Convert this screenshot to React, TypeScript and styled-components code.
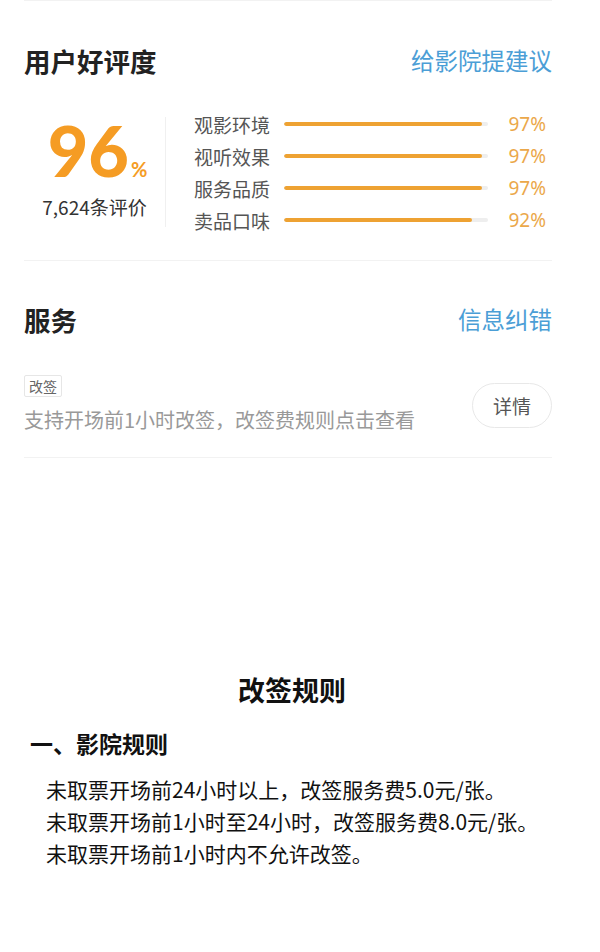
import React from "react";
import styled, { createGlobalStyle } from "styled-components";

const Global = createGlobalStyle`
  html, body { margin: 0; padding: 0; background: #fff; }
  body { font-family: "Noto Sans CJK SC", "Noto Sans", sans-serif; color: #222; }
`;

const Page = styled.div`
  width: 600px;
  height: 952px;
  background: #fff;
  overflow: hidden;
`;

const Content = styled.div`
  padding: 0 48px 0 24px;
`;

const Rule = styled.div`
  height: 1px;
  background: #f2f2f2;
`;

const Spacer = styled.div<{ $h: number }>`
  height: ${(p) => p.$h}px;
`;

const SectionHead = styled.div`
  display: flex;
  justify-content: space-between;
  align-items: center;
  height: 38px;
`;

const SectionTitle = styled.h2`
  margin: 0;
  font-size: 26.5px;
  font-weight: 700;
  color: #222;
`;

const SectionLink = styled.span`
  font-size: 23.5px;
  color: #4b9ed6;
`;

const Rating = styled.div`
  display: flex;
  align-items: center;
  margin-top: 29px;
  margin-bottom: 24px;
`;

const ScoreCol = styled.div`
  width: 142px;
  height: 110px;
  box-sizing: border-box;
  padding-top: 5px;
  display: flex;
  flex-direction: column;
  align-items: center;
  justify-content: flex-start;
  border-right: 1px solid #f0f0f0;
`;

const Score = styled.div`
  display: flex;
  align-items: baseline;
  color: #f59c24;
  height: 56px;
  margin-left: 6px;
`;

const ScoreNum = styled.div`
  font-family: Lato, "Noto Sans", sans-serif;
  font-size: 70px;
  font-weight: 900;
  letter-spacing: 0px;
  line-height: 56px;
  height: 56px;
`;

const ScorePct = styled.div`
  font-family: Lato, "Noto Sans", sans-serif;
  font-size: 20px;
  font-weight: 700;
  margin-left: 2px;
  line-height: 20px;
`;

const Count = styled.div`
  font-size: 19px;
  color: #333;
  margin-top: 16px;
  line-height: 26px;
`;

const Bars = styled.div`
  flex: 1;
  display: flex;
  flex-direction: column;
  padding-left: 28px;
`;

const BarRow = styled.div`
  display: flex;
  align-items: center;
  height: 32px;
`;

const BarLabel = styled.span`
  font-size: 19px;
  color: #555;
  width: 90px;
`;

const Track = styled.div`
  width: 204px;
  height: 4px;
  background: #eeeeee;
  border-radius: 2px;
  overflow: hidden;
`;

const Fill = styled.div`
  height: 100%;
  background: #eea232;
  border-radius: 2px;
`;

const BarPct = styled.span`
  margin-left: auto;
  margin-right: 6px;
  font-size: 19px;
  color: #eba84a;
  font-family: "Noto Sans", sans-serif;
`;

const ServiceRow = styled.div`
  display: flex;
  align-items: center;
  justify-content: space-between;
  margin-top: 37px;
  margin-bottom: 22px;
`;

const ServiceText = styled.div`
  display: flex;
  flex-direction: column;
  align-items: flex-start;
`;

const Tag = styled.span`
  font-size: 14px;
  color: #666;
  border: 1px solid #e6e6e6;
  border-radius: 2px;
  padding: 0 4px;
  line-height: 20px;
`;

const Desc = styled.div`
  font-size: 20px;
  color: #999;
  margin-top: 8px;
  line-height: 30px;
`;

const PillButton = styled.button`
  width: 80px;
  height: 45px;
  border-radius: 23px;
  border: 1px solid #e8e8e8;
  background: #fff;
  font-family: inherit;
  font-size: 19px;
  color: #555;
`;

const Rules = styled.div`
  margin-top: 212px;
  padding: 0 30px;
`;

const RulesTitle = styled.h2`
  margin: 0;
  text-align: center;
  font-size: 27px;
  font-weight: 700;
  color: #111;
  padding-right: 16px;
`;

const RulesSub = styled.h3`
  margin: 17px 0 0;
  font-size: 23px;
  font-weight: 700;
  color: #111;
`;

const RulesList = styled.div`
  margin-top: 13px;
  padding-left: 16px;
`;

const RulesLine = styled.p`
  margin: 0;
  font-size: 21px;
  line-height: 32px;
  color: #111;
  white-space: nowrap;
`;

const items = [
  { label: "观影环境", v: 97 },
  { label: "视听效果", v: 97 },
  { label: "服务品质", v: 97 },
  { label: "卖品口味", v: 92 },
];

export default function App() {
  return (
    <Page>
      <Global />
      <Content>
        <Rule />
        <Spacer $h={40} />
        <SectionHead>
          <SectionTitle>用户好评度</SectionTitle>
          <SectionLink>给影院提建议</SectionLink>
        </SectionHead>
        <Rating>
          <ScoreCol>
            <Score>
              <ScoreNum>96</ScoreNum>
              <ScorePct>%</ScorePct>
            </Score>
            <Count>7,624条评价</Count>
          </ScoreCol>
          <Bars>
            {items.map((it) => (
              <BarRow key={it.label}>
                <BarLabel>{it.label}</BarLabel>
                <Track>
                  <Fill style={{ width: `${it.v}%` }} />
                </Track>
                <BarPct>{it.v}%</BarPct>
              </BarRow>
            ))}
          </Bars>
        </Rating>
        <Rule />
        <Spacer $h={39} />
        <SectionHead>
          <SectionTitle>服务</SectionTitle>
          <SectionLink>信息纠错</SectionLink>
        </SectionHead>
        <ServiceRow>
          <ServiceText>
            <Tag>改签</Tag>
            <Desc>支持开场前1小时改签，改签费规则点击查看</Desc>
          </ServiceText>
          <PillButton>详情</PillButton>
        </ServiceRow>
        <Rule />
      </Content>
      <Rules>
        <RulesTitle>改签规则</RulesTitle>
        <RulesSub>一、影院规则</RulesSub>
        <RulesList>
          <RulesLine>未取票开场前24小时以上，改签服务费5.0元/张。</RulesLine>
          <RulesLine>未取票开场前1小时至24小时，改签服务费8.0元/张。</RulesLine>
          <RulesLine>未取票开场前1小时内不允许改签。</RulesLine>
        </RulesList>
      </Rules>
    </Page>
  );
}
